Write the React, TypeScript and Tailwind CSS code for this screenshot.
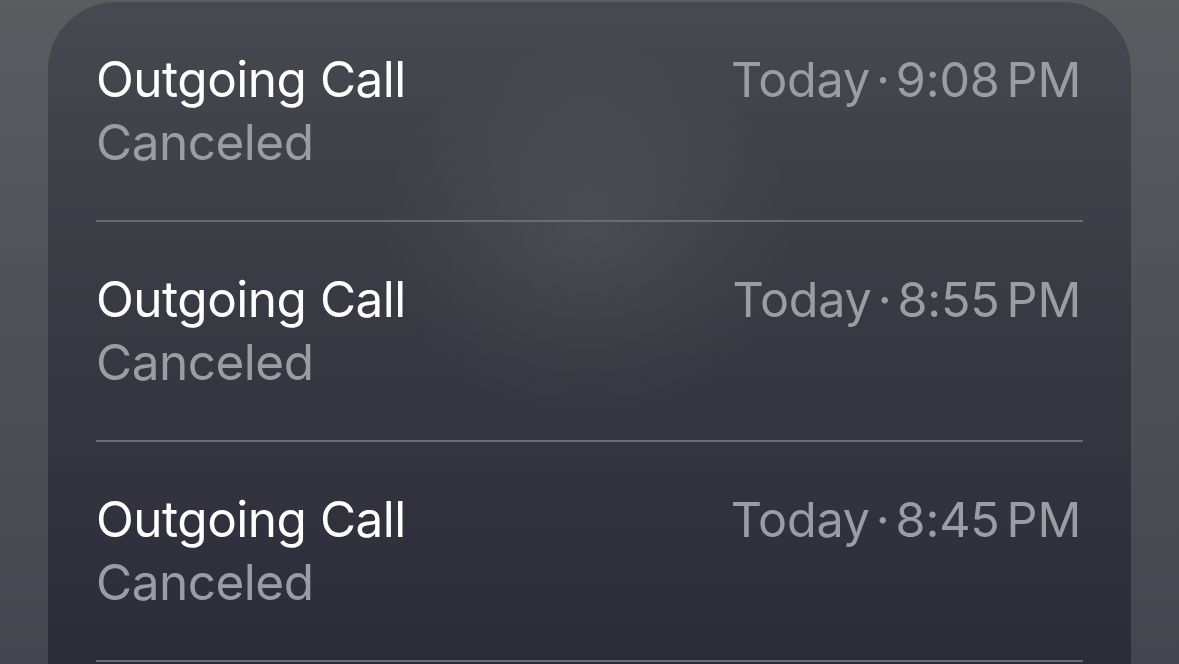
import React from 'react';

const calls = [
  { title: 'Outgoing Call', status: 'Canceled', time: '9:08' },
  { title: 'Outgoing Call', status: 'Canceled', time: '8:55' },
  { title: 'Outgoing Call', status: 'Canceled', time: '8:45' },
];

const App = () => {
  return (
    <div
      className="h-[664px] w-[1179px] overflow-hidden bg-gradient-to-b from-[#5a5c60] to-[#45454f] px-[48px] pt-[2px]"
      style={{ fontFamily: 'Inter, "Noto Sans", sans-serif' }}
    >
      {/* Card */}
      <div className="relative h-[720px] w-[1083px] overflow-hidden rounded-t-[68px] bg-gradient-to-b from-[#464950] via-[#363841] to-[#2a2a37] px-[48px]">
        <div className="pointer-events-none absolute left-[330px] top-[40px] h-[380px] w-[420px] rounded-full bg-[radial-gradient(closest-side,rgba(255,255,255,0.07),rgba(255,255,255,0))]" />
        <div className="relative">
          {calls.map((call, i) => (
            <div key={i} className="border-b-2 border-[#6a6c73] pt-[46px] pb-[46px]">
              <div className="flex items-baseline justify-between">
                <span className="text-[49.5px] leading-[63px] tracking-[-0.5px] text-white">{call.title}</span>
                <span className="pr-[2px] text-[48.5px] leading-[63px] tracking-[-0.2px] text-[#9c9da4]">
                  Today<span className="mx-[6px]">·</span>{call.time}<span className="ml-[7px]">PM</span>
                </span>
              </div>
              <div className="text-[49.5px] leading-[63px] tracking-[-0.5px] text-[#9c9da4]">{call.status}</div>
            </div>
          ))}
        </div>
      </div>
    </div>
  );
};

export default App;
